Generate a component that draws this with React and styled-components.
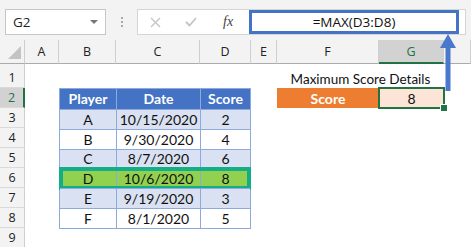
import React from "react";
import styled, { createGlobalStyle } from "styled-components";

const GlobalStyle = createGlobalStyle`
  html, body { margin: 0; padding: 0; background: #fff; overflow: hidden; }
  body { font-family: Lato, "Open Sans", sans-serif; }
  * { box-sizing: border-box; }
`;

const Window = styled.div`
  position: relative;
  width: 471px;
  height: 247px;
  overflow: hidden;
  background: #fff;
`;

const Toolbar = styled.div`
  height: 40px;
  background: #f3f3f3;
  display: flex;
  align-items: flex-start;
  padding: 9px 0 0 5px;
`;

const NameBox = styled.div`
  width: 101px;
  height: 26px;
  background: #fff;
  border: 1px solid #c6c6c6;
  display: flex;
  align-items: center;
  justify-content: space-between;
  padding: 0 7px 0 7px;
  font-family: "Open Sans", sans-serif;
  font-size: 13.5px;
  color: #222;
`;

const Caret = styled.span`
  width: 0;
  height: 0;
  border-left: 4px solid transparent;
  border-right: 4px solid transparent;
  border-top: 4px solid #777;
`;

const Dots = styled.div`
  width: 31px;
  height: 26px;
  display: flex;
  flex-direction: column;
  align-items: center;
  justify-content: center;
  gap: 2px;
  span {
    width: 2px;
    height: 2px;
    background: #a8a8a8;
  }
`;

const FormulaBar = styled.div`
  width: 329px;
  height: 26px;
  background: #fff;
  border: 1px solid #d5d5d5;
  display: flex;
  align-items: stretch;
`;

const FormulaButtons = styled.div`
  width: 111px;
  display: flex;
  align-items: center;
  padding-left: 12px;
  gap: 24px;
`;

const Fx = styled.span`
  font-family: "Liberation Serif", serif;
  font-style: italic;
  font-size: 14px;
  color: #444;
  margin-left: 2px;
`;

const FormulaInput = styled.div`
  width: 210px;
  border: 3px solid #4472c4;
  display: flex;
  align-items: center;
  justify-content: center;
  font-family: "Open Sans", sans-serif;
  font-size: 13.5px;
  color: #111;
`;

const Sheet = styled.div`
  display: grid;
  grid-template-columns: 25px 34px 57px 84px 51px 26px 102px 65px 1fr;
  grid-template-rows: 24px 24px repeat(8, 20px);
  font-size: 14px;
`;

const HeadCell = styled.div`
  background: ${(p) => (p.$active ? "#d2d2d2" : "#f3f3f3")};
  color: ${(p) => (p.$active ? "#217346" : "#222")};
  border-right: 1px solid #cfcfcf;
  border-bottom: ${(p) => (p.$active ? "2px solid #217346" : "1px solid #ababab")};
  display: flex;
  align-items: center;
  justify-content: center;
  font-family: "Open Sans", sans-serif;
  font-size: 12.5px;
`;

const Corner = styled(HeadCell)`
  position: relative;
  &::after {
    content: "";
    position: absolute;
    right: 3px;
    bottom: 4px;
    border-left: 13px solid transparent;
    border-bottom: 13px solid #c3c3c3;
  }
`;

const RowHead = styled.div`
  grid-column: 1;
  background: ${(p) => (p.$active ? "#d2d2d2" : "#f3f3f3")};
  color: ${(p) => (p.$active ? "#217346" : "#222")};
  border-right: ${(p) => (p.$active ? "2px solid #217346" : "1px solid #cfcfcf")};
  border-bottom: 1px solid #dadada;
  display: flex;
  align-items: flex-end;
  justify-content: center;
  padding-bottom: 1px;
  font-family: "Open Sans", sans-serif;
  font-size: 12.5px;
`;

const Title = styled.div`
  grid-column: 7 / 9;
  grid-row: 2;
  display: flex;
  align-items: flex-end;
  justify-content: center;
  padding-bottom: 1px;
  color: #111;
  font-size: 13.5px;
`;

const LabelCell = styled.div`
  grid-column: 7;
  grid-row: 3;
  background: #ed7d31;
  color: #fff;
  font-weight: 700;
  display: flex;
  align-items: center;
  justify-content: center;
`;

const ValueCell = styled.div`
  position: relative;
  grid-column: 8;
  grid-row: 3;
  background: #fce4d6;
  color: #111;
  display: flex;
  align-items: center;
  justify-content: center;
  &::after {
    content: "";
    position: absolute;
    inset: -1px -1px -1px -1px;
    border: 2px solid #217346;
  }
  &::before {
    content: "";
    position: absolute;
    right: -4px;
    bottom: -4px;
    width: 6px;
    height: 6px;
    background: #217346;
    border: 1px solid #fff;
    z-index: 2;
  }
`;

const Table = styled.div`
  grid-column: 3 / 6;
  grid-row: 3 / 10;
  display: flex;
  flex-direction: column;
  border: 1px solid #8ea9db;
  margin-bottom: -1px;
`;

const bg = { head: "#4472c4", band: "#d9e1f2", plain: "#ffffff", hi: "#92d050" };

const TRow = styled.div`
  position: relative;
  height: 20px;
  display: grid;
  grid-template-columns: 56px 84px 50px;
  background: ${(p) => bg[p.$kind]};
  color: ${(p) => (p.$kind === "head" ? "#fff" : "#111")};
  font-weight: ${(p) => (p.$kind === "head" ? 700 : 400)};
  border-top: ${(p) => (p.$first ? "none" : "1px solid #8ea9db")};
  &::after {
    content: "";
    display: ${(p) => (p.$kind === "hi" ? "block" : "none")};
    position: absolute;
    inset: -2px -1px -2px -1px;
    border: 4px solid #13ad88;
  }
`;

const TCell = styled.div`
  display: flex;
  align-items: center;
  justify-content: center;
  border-left: ${(p) => (p.$first ? "none" : "1px solid #8ea9db")};
`;

const Arrow = styled.svg`
  position: absolute;
  left: 440px;
  top: 34px;
`;

const cols = ["A", "B", "C", "D", "E", "F", "G", ""];
const data = [
  ["head", "Player", "Date", "Score"],
  ["band", "A", "10/15/2020", "2"],
  ["plain", "B", "9/30/2020", "4"],
  ["band", "C", "8/7/2020", "6"],
  ["hi", "D", "10/6/2020", "8"],
  ["band", "E", "9/19/2020", "3"],
  ["plain", "F", "8/1/2020", "5"],
];

export default function App() {
  return (
    <Window>
      <GlobalStyle />
      <Toolbar>
        <NameBox>
          G2
          <Caret />
        </NameBox>
        <Dots>
          <span />
          <span />
          <span />
        </Dots>
        <FormulaBar>
          <FormulaButtons>
            <svg width="11" height="11" viewBox="0 0 11 11">
              <path d="M1 1 L10 10 M10 1 L1 10" stroke="#c4c4c4" strokeWidth="1.4" fill="none" />
            </svg>
            <svg width="12" height="10" viewBox="0 0 12 10">
              <path d="M1 5 L4.5 8.5 L11 1" stroke="#c4c4c4" strokeWidth="1.8" fill="none" />
            </svg>
            <Fx>fx</Fx>
          </FormulaButtons>
          <FormulaInput>=MAX(D3:D8)</FormulaInput>
        </FormulaBar>
      </Toolbar>
      <Sheet>
        <Corner />
        {cols.map((c, i) => (
          <HeadCell key={i} $active={c === "G"}>
            {c}
          </HeadCell>
        ))}
        {[1, 2, 3, 4, 5, 6, 7, 8, 9].map((n) => (
          <RowHead key={n} $active={n === 2} style={{ gridRow: n + 1 }}>
            {n}
          </RowHead>
        ))}
        <Title>Maximum Score Details</Title>
        <LabelCell>Score</LabelCell>
        <ValueCell>8</ValueCell>
        <Table>
          {data.map((r, i) => (
            <TRow key={i} $kind={r[0]} $first={i === 0}>
              <TCell $first>{r[1]}</TCell>
              <TCell>{r[2]}</TCell>
              <TCell>{r[3]}</TCell>
            </TRow>
          ))}
        </Table>
      </Sheet>
      <Arrow width="16" height="57" viewBox="0 0 16 57">
        <path d="M8 0 L16 14 L0 14 Z" fill="#4a78cc" />
        <rect x="5.5" y="12" width="5" height="45" fill="#4a78cc" />
      </Arrow>
    </Window>
  );
}
